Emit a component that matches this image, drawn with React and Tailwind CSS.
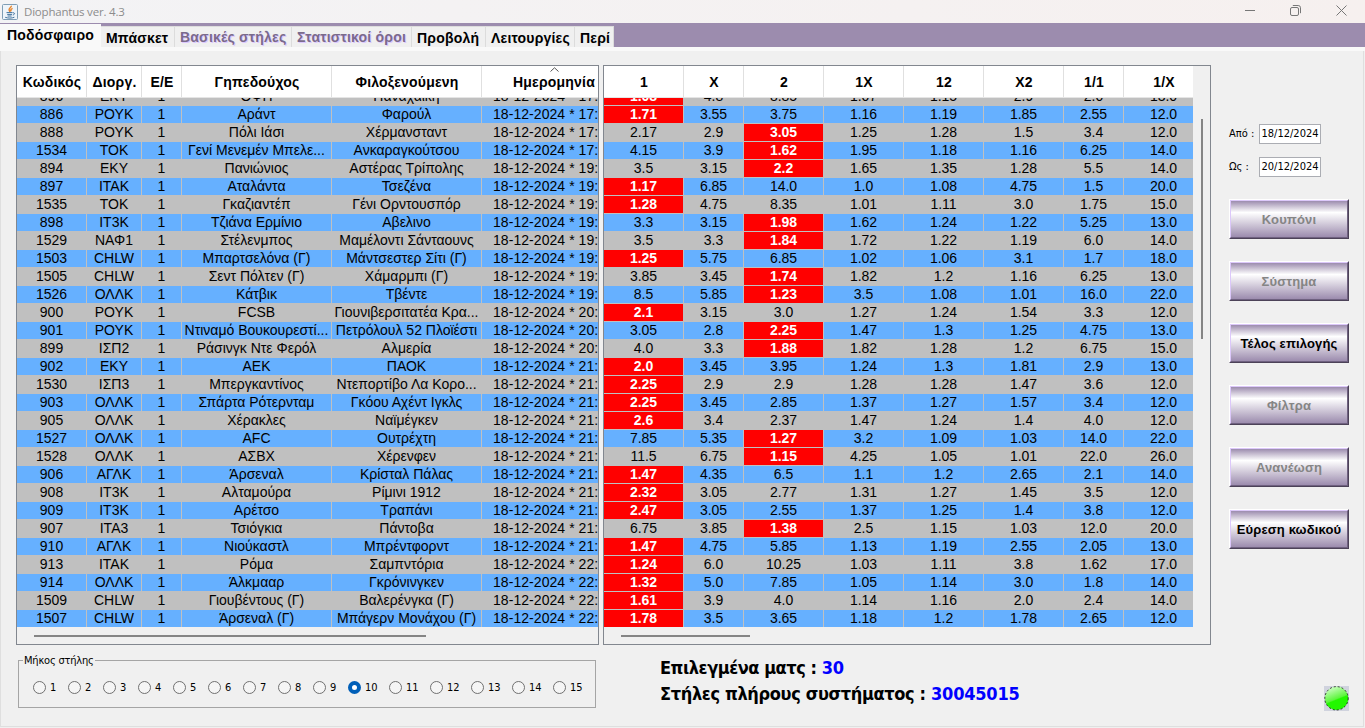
import React, { useState } from "react";

// code | league | home-away | home | away | time | 1 | X | 2 | 1X | 12 | X2 | 1/1 | 1/X | favourite column
const matches = `
896|ΕΚΥ|1|ΟΦΗ|Παναχαϊκή|17:00|1.08|4.8|8.85|1.07|1.15|2.9|2.0|13.0|0
886|ΡΟΥΚ|1|Αράντ|Φαρούλ|17:00|1.71|3.55|3.75|1.16|1.19|1.85|2.55|12.0|0
888|ΡΟΥΚ|1|Πόλι Ιάσι|Χέρμανσταντ|17:00|2.17|2.9|3.05|1.25|1.28|1.5|3.4|12.0|2
1534|ΤΟΚ|1|Γενί Μενεμέν Μπελε...|Ανκαραγκούτσου|17:30|4.15|3.9|1.62|1.95|1.18|1.16|6.25|14.0|2
894|ΕΚΥ|1|Πανιώνιος|Αστέρας Τρίπολης|19:00|3.5|3.15|2.2|1.65|1.35|1.28|5.5|14.0|2
897|ΙΤΑΚ|1|Αταλάντα|Τσεζένα|19:00|1.17|6.85|14.0|1.0|1.08|4.75|1.5|20.0|0
1535|ΤΟΚ|1|Γκαζιαντέπ|Γένι Ορντουσπόρ|19:30|1.28|4.75|8.35|1.01|1.11|3.0|1.75|15.0|0
898|ΙΤ3Κ|1|Τζιάνα Ερμίνιο|Αβελινο|19:30|3.3|3.15|1.98|1.62|1.24|1.22|5.25|13.0|2
1529|ΝΑΦ1|1|Στέλενμπος|Μαμέλοντι Σάνταουνς|19:30|3.5|3.3|1.84|1.72|1.22|1.19|6.0|14.0|2
1503|CHLW|1|Μπαρτσελόνα (Γ)|Μάντσεστερ Σίτι (Γ)|19:45|1.25|5.75|6.85|1.02|1.06|3.1|1.7|18.0|0
1505|CHLW|1|Σεντ Πόλτεν (Γ)|Χάμαρμπι (Γ)|19:45|3.85|3.45|1.74|1.82|1.2|1.16|6.25|13.0|2
1526|ΟΛΛΚ|1|Κάτβικ|Τβέντε|19:45|8.5|5.85|1.23|3.5|1.08|1.01|16.0|22.0|2
900|ΡΟΥΚ|1|FCSB|Γιουνιβερσιτατέα Κρα...|20:00|2.1|3.15|3.0|1.27|1.24|1.54|3.3|12.0|0
901|ΡΟΥΚ|1|Ντιναμό Βουκουρεστί...|Πετρόλουλ 52 Πλοϊέστι|20:00|3.05|2.8|2.25|1.47|1.3|1.25|4.75|13.0|2
899|ΙΣΠ2|1|Ράσινγκ Ντε Φερόλ|Αλμερία|20:00|4.0|3.3|1.88|1.82|1.28|1.2|6.75|15.0|2
902|ΕΚΥ|1|ΑΕΚ|ΠΑΟΚ|21:00|2.0|3.45|3.95|1.24|1.3|1.81|2.9|13.0|0
1530|ΙΣΠ3|1|Μπεργκαντίνος|Ντεπορτίβο Λα Κορο...|21:00|2.25|2.9|2.9|1.28|1.28|1.47|3.6|12.0|0
903|ΟΛΛΚ|1|Σπάρτα Ρότερνταμ|Γκόου Αχέντ Ιγκλς|21:00|2.25|3.45|2.85|1.37|1.27|1.57|3.4|12.0|0
905|ΟΛΛΚ|1|Χέρακλες|Ναϊμέγκεν|21:00|2.6|3.4|2.37|1.47|1.24|1.4|4.0|12.0|0
1527|ΟΛΛΚ|1|AFC|Ουτρέχτη|21:00|7.85|5.35|1.27|3.2|1.09|1.03|14.0|22.0|2
1528|ΟΛΛΚ|1|ΑΣΒΧ|Χέρενφεν|21:00|11.5|6.75|1.15|4.25|1.05|1.01|22.0|26.0|2
906|ΑΓΛΚ|1|Άρσεναλ|Κρίσταλ Πάλας|21:30|1.47|4.35|6.5|1.1|1.2|2.65|2.1|14.0|0
908|ΙΤ3Κ|1|Αλταμούρα|Ρίμινι 1912|21:30|2.32|3.05|2.77|1.31|1.27|1.45|3.5|12.0|0
909|ΙΤ3Κ|1|Αρέτσο|Τραπάνι|21:30|2.47|3.05|2.55|1.37|1.25|1.4|3.8|12.0|0
907|ΙΤΑ3|1|Τσιόγκια|Πάντοβα|21:30|6.75|3.85|1.38|2.5|1.15|1.03|12.0|20.0|2
910|ΑΓΛΚ|1|Νιούκαστλ|Μπρέντφορντ|21:45|1.47|4.75|5.85|1.13|1.19|2.55|2.05|13.0|0
913|ΙΤΑΚ|1|Ρόμα|Σαμπντόρια|22:00|1.24|6.0|10.25|1.03|1.11|3.8|1.62|17.0|0
914|ΟΛΛΚ|1|Άλκμααρ|Γκρόνινγκεν|22:00|1.32|5.0|7.85|1.05|1.14|3.0|1.8|14.0|0
1509|CHLW|1|Γιουβέντους (Γ)|Βαλερένγκα (Γ)|22:00|1.61|3.9|4.0|1.14|1.16|2.0|2.4|14.0|0
1507|CHLW|1|Άρσεναλ (Γ)|Μπάγερν Μονάχου (Γ)|22:00|1.78|3.5|3.65|1.18|1.2|1.78|2.65|12.0|0
`
	.trim()
	.split("\n")
	.map((line) => line.split("|"));

const tabs = [
	{ label: "Μπάσκετ", width: "w-[74px]" },
	{ label: "Βασικές στήλες", width: "w-[117px]", disabled: true },
	{ label: "Στατιστικοί όροι", width: "w-[120px]", disabled: true },
	{ label: "Προβολή", width: "w-[74px]" },
	{ label: "Λειτουργίες", width: "w-[89px]" },
	{ label: "Περί", width: "w-[39px]" },
];

const matchColumns = ["Κωδικός", "Διοργ.", "Ε/Ε", "Γηπεδούχος", "Φιλοξενούμενη", "Ημερομηνία"];
const oddsColumns = ["1", "X", "2", "1X", "12", "X2", "1/1", "1/X"];

const buttons = [
	{ label: "Κουπόνι", disabled: true },
	{ label: "Σύστημα", disabled: true },
	{ label: "Τέλος επιλογής" },
	{ label: "Φίλτρα", disabled: true },
	{ label: "Ανανέωση", disabled: true },
	{ label: "Εύρεση κωδικού" },
];

const matchGrid = "grid w-[615px] grid-cols-[70px_55px_40px_150px_150px_150px]";
const oddsGrid = "grid w-[600px] grid-cols-[80px_60px_80px_80px_80px_80px_60px_80px]";

function HeaderRow({ columns, grid, sorted }) {
	return (
		<div className={`${grid} h-8 border-b border-[#e5e5e5] bg-white font-bold tracking-[0.2px]`}>
			{columns.map((c, i) => (
				<div
					key={c}
					className={`relative flex items-center justify-center border-r border-[#e0e0e0] pt-px ${
						i === sorted ? "pr-[5px]" : "pl-px"
					}`}>
					{c}
					{i === sorted && (
						<svg className="absolute top-[1px] left-[68px]" width="9" height="5" viewBox="0 0 9 5" fill="none">
							<path d="M0.5 4.5L4.5 0.8L8.5 4.5" stroke="#555" />
						</svg>
					)}
				</div>
			))}
		</div>
	);
}

function Row({ cells, grid, index, hot }) {
	return (
		<div className={`${grid} h-[18px] ${index % 2 ? "bg-[#66b0ff]" : "bg-[#c0c0c0]"}`}>
			{cells.map((c, i) => (
				<div
					key={i}
					className={`overflow-hidden border-r border-b border-[#c0c0c0] leading-[17px] whitespace-nowrap ${
						i === hot ? "bg-[#ff0000] font-bold text-white" : ""
					} ${c.includes("*") ? "pl-[11px] text-left tracking-[0.06px]" : "text-center"}`}>
					{c}
				</div>
			))}
		</div>
	);
}

function JavaIcon() {
	return (
		<svg width="16" height="16" viewBox="0 0 16 16" fill="none">
			<rect x="0.5" y="0.5" width="15" height="15" rx="1" fill="#eef4fa" stroke="#7f9db5" />
			<path d="M9.3 1.8C9.8 3.6 6.2 4.2 7.2 6.2L8 7.8M10.6 4.4C8.4 5.4 8.6 6.2 9.2 7.4" stroke="#e8862e" strokeWidth="1.5" />
			<path d="M4.5 8.6H10.5M5.2 10.4H10M5.6 12H9.6M3.2 13.3C6 14.4 10 14.3 12.4 13.2M10.8 8.8C13.2 8.4 13 10.6 10.8 11" stroke="#41719c" />
		</svg>
	);
}

function TitleBar() {
	return (
		<div className="flex h-[23px] items-center bg-linear-to-r from-[#f3f3f5] to-[#f6f0ef] pl-[2px] text-[#8c8c8c]">
			<JavaIcon />
			<span className="ml-[6px] font-['Open_Sans',sans-serif] text-[11.5px] tracking-[-0.2px]">Diophantus ver. 4.3</span>
			<div className="mr-[18px] ml-auto flex items-center gap-[35px] pb-[2px]">
				<svg width="10" height="11" viewBox="0 0 10 11" stroke="#777">
					<path d="M0 5.5H10" />
				</svg>
				<svg width="11" height="11" viewBox="0 0 11 11" fill="none" stroke="#777">
					<rect x="0.5" y="2.5" width="8" height="8" rx="1.5" />
					<path d="M2.8 0.5H8.2Q10.5 0.5 10.5 2.8V8.2" />
				</svg>
				<svg width="11" height="11" viewBox="0 0 11 11" stroke="#777">
					<path d="M0.5 0.5L10.5 10.5M10.5 0.5L0.5 10.5" />
				</svg>
			</div>
		</div>
	);
}

function TabBar() {
	return (
		<div className="flex h-7 flex-col bg-[#f9f9f9] text-[14px] font-bold tracking-[0.2px]">
			<div className="flex h-6 items-end bg-[#9c8cae] whitespace-nowrap">
				<div className="flex h-[23px] w-[101px] items-center bg-[#f9f9f9] pl-[7px]">Ποδόσφαιρο</div>
				{tabs.map((t) => (
					<div
						key={t.label}
						className={`flex h-[21px] items-center border-t border-r border-[#dcdcdc] bg-[#f0f0f0] pl-[5px] ${t.width} ${
							t.disabled ? "text-[#7a6a8c] [text-shadow:1px_1px_0_#dcc8ff]" : "pt-[2px]"
						}`}>
						{t.label}
					</div>
				))}
			</div>
		</div>
	);
}

function SideButton({ label, disabled }) {
	return (
		<button
			className={`h-10 w-[120px] border border-t-white border-r-[#4c4258] border-b-[#4c4258] border-l-white font-['Liberation_Sans',Arial,sans-serif] text-[13px] font-bold whitespace-nowrap ${
				disabled ? "text-[#858585]" : "text-black"
			}`}>
			<span className="flex h-full items-center justify-center border border-t-[#dcc8fa] border-r-[#6f6180] border-b-[#6f6180] border-l-[#dcc8fa] bg-[linear-gradient(to_bottom,#9c8cae_0%,#ffffff_32%,#9c8cae_100%)] pt-[2px] tracking-[0.15px]">
				{label}
			</span>
		</button>
	);
}

function DateField({ label, value }) {
	return (
		<label className="flex h-5 items-center">
			<span className="w-[30px]">{label}</span>
			<span className="flex h-5 w-[62px] items-center justify-center border border-[#abadb3] bg-white pt-px">{value}</span>
		</label>
	);
}

function Radio({ value, checked, onSelect }) {
	return (
		<label className={`flex items-center gap-1 ${value > 9 ? "w-[41px]" : "w-[35px]"}`}>
			<input type="radio" name="length" className="sr-only" checked={checked} onChange={() => onSelect(value)} />
			<span
				className={`size-[13px] rounded-full ${
					checked ? "border-4 border-[#005fb8] bg-white" : "border border-[#707070] bg-[#f5f5f5]"
				}`}
			/>
			<span className="pt-px">{value}</span>
		</label>
	);
}

export default function App() {
	const [length, setLength] = useState(10);

	return (
		<div className="flex h-[728px] w-[1365px] flex-col overflow-hidden bg-[#f0f0f0] font-['Liberation_Sans',Arial,sans-serif] text-[14px] text-black">
			<TitleBar />
			<TabBar />

			<div className="mr-px flex h-[676px] border-x border-b border-[#dfdfdf] pt-[14px] pl-[15px]">
				<div className="w-[1195px]">
					<div className="flex gap-1">
						{/* Matches */}
						<div className="h-[580px] w-[583px] overflow-hidden border border-[#82878f]">
							<HeaderRow columns={matchColumns} grid={matchGrid} sorted={5} />
							<div className="flex h-[529px] flex-col justify-end overflow-hidden">
								<div className="-mb-px">
									{matches.map((m, i) => (
										<Row
											key={m[0]}
											index={i}
											grid={matchGrid}
											cells={[...m.slice(0, 5), `18-12-2024 * ${m[5]}`]}
										/>
									))}
								</div>
							</div>
							<div className="mt-2 ml-[17px] h-[2px] w-[392px] bg-[#858585]" />
						</div>

						{/* Odds */}
						<div className="h-[580px] w-[608px] overflow-hidden border border-[#82878f]">
							<div className="flex">
								<div className="w-[589px] overflow-hidden">
									<HeaderRow columns={oddsColumns} grid={oddsGrid} />
									<div className="flex h-[529px] flex-col justify-end overflow-hidden">
										<div className="-mb-px">
											{matches.map((m, i) => (
												<Row key={m[0]} index={i} grid={oddsGrid} cells={m.slice(6, 14)} hot={Number(m[14])} />
											))}
										</div>
									</div>
								</div>
								<div className="mt-[53px] ml-2 h-[220px] w-[2px] bg-[#858585]" />
							</div>
							<div className="mt-2 ml-[17px] h-[2px] w-[129px] bg-[#858585]" />
						</div>
					</div>

					<div className="flex">
						<fieldset className="mt-[7px] ml-[2px] h-[56px] w-[578px] border border-[#a5a5a5] pl-[14px] font-['DejaVu_Sans_Condensed','DejaVu_Sans',sans-serif] text-[11px]">
							<legend className="-ml-[10px] px-px pt-[2px] leading-[14px] tracking-[-0.2px]">Μήκος στήλης</legend>
							<div className="mt-[11px] flex">
								{Array.from({ length: 15 }, (_, i) => (
									<Radio key={i} value={i + 1} checked={length === i + 1} onSelect={setLength} />
								))}
							</div>
						</fieldset>
						<div className="mt-[10px] ml-16 font-['DejaVu_Sans_Condensed','DejaVu_Sans',sans-serif] text-[18px] leading-[26px] font-bold whitespace-nowrap">
							<p className="tracking-[-0.46px]">
								Επιλεγμένα ματς : <span className="tracking-[-0.2px] text-[#0000ff]">30</span>
							</p>
							<p className="tracking-[-0.35px]">
								Στήλες πλήρους συστήματος : <span className="tracking-[-0.2px] text-[#0000ff]">30045015</span>
							</p>
						</div>
					</div>
				</div>

				{/* Right panel */}
				<div className="ml-[18px] flex w-[120px] flex-col pt-[59px] font-['DejaVu_Sans_Condensed','DejaVu_Sans',sans-serif] text-[11px] whitespace-nowrap">
					<div className="flex flex-col gap-[13px]">
						<DateField label="Από :" value="18/12/2024" />
						<DateField label="Ως :" value="20/12/2024" />
					</div>
					<div className="mt-[22px] flex flex-col gap-[22px]">
						{buttons.map((b) => (
							<SideButton key={b.label} {...b} />
						))}
					</div>
					<div className="mt-[137px] ml-auto size-[25px] bg-[#d0d3de]">
						<svg width="25" height="25" viewBox="0 0 25 25">
							<defs>
								<linearGradient id="led" x1="0.2" y1="0" x2="0.6" y2="1">
									<stop offset="0" stopColor="#d8ffd0" />
									<stop offset="0.55" stopColor="#5cf53c" />
									<stop offset="0.6" stopColor="#22f800" />
								</linearGradient>
							</defs>
							<circle cx="12.5" cy="12.3" r="11.7" fill="url(#led)" stroke="#111" strokeWidth="0.8" strokeDasharray="2 2" />
						</svg>
					</div>
				</div>
			</div>
		</div>
	);
}
